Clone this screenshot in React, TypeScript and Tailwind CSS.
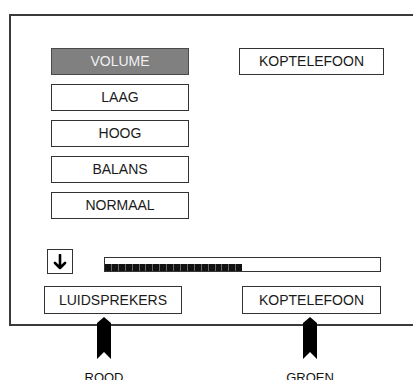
import type { ReactNode } from "react";

const font = { fontFamily: '"Liberation Sans", Arial, sans-serif' };

function Btn({
  children,
  active,
  className = "",
}: {
  children: ReactNode;
  active?: boolean;
  className?: string;
}) {
  return (
    <div
      className={
        "flex items-center justify-center border text-[14px] " +
        (active
          ? "bg-[#808080] border-[#4a4a4a] text-[#f0f0f0] "
          : "bg-white border-[#333] text-[#1a1a1a] ") +
        className
      }
    >
      {children}
    </div>
  );
}

// lintje met pijlpunt naar boven en inkeping onderaan
function Marker() {
  return (
    <svg width="14" height="42" viewBox="0 0 14 42" className="block">
      <polygon points="0,6 7,0 14,6 14,42 7,35 0,42" fill="#000" />
    </svg>
  );
}

function App() {
  const segments = Array.from({ length: 20 });

  return (
    <div className="w-[413px] h-[380px] overflow-hidden bg-white" style={font}>
      <div className="pt-[14px] pl-[9px]">
        {/* hoofdpaneel */}
        <div className="w-[420px] h-[312px] border-t-2 border-l-2 border-b-2 border-[#3a3a3a] flex flex-col">
          <div className="flex pt-[32px] pl-[40px]">
            <div className="flex flex-col gap-[9px] w-[138px]">
              <Btn active className="h-[27px]">VOLUME</Btn>
              <Btn className="h-[27px]">LAAG</Btn>
              <Btn className="h-[27px]">HOOG</Btn>
              <Btn className="h-[27px]">BALANS</Btn>
              <Btn className="h-[27px]">NORMAAL</Btn>
            </div>
            <div className="ml-[50px]">
              <Btn className="h-[27px] w-[145px]">KOPTELEFOON</Btn>
            </div>
          </div>

          <div className="flex items-end pl-[36px] mt-[30px]">
            <div className="w-[26px] h-[25px] border border-[#333] flex items-center justify-center">
              <svg width="14" height="16" viewBox="0 0 14 16">
                <path
                  d="M7 1 V14 M2 9 L7 14 L12 9"
                  stroke="#000"
                  strokeWidth="2.6"
                  fill="none"
                  strokeLinecap="round"
                  strokeLinejoin="round"
                />
              </svg>
            </div>
            <div className="ml-[31px] mb-[2px] w-[277px] h-[15px] border border-[#333] flex items-end">
              <div className="flex gap-px h-[7px] w-[137px] bg-[#666]">
                {segments.map((_, i) => (
                  <span key={i} className="flex-1 h-full bg-[#111]" />
                ))}
              </div>
            </div>
          </div>

          <div className="flex pl-[33px] mt-[12px]">
            <Btn className="h-[28px] w-[138px]">LUIDSPREKERS</Btn>
            <Btn className="h-[28px] w-[139px] ml-[60px]">KOPTELEFOON</Btn>
          </div>
        </div>
      </div>

      {/* aansluitingen */}
      <div className="flex -mt-[9px] pl-[64px] relative">
        <div className="w-[80px] flex flex-col items-center">
          <Marker />
          <span className="mt-[11px] text-[13px] leading-[16px] text-[#111]">ROOD</span>
        </div>
        <div className="w-[80px] ml-[126px] flex flex-col items-center">
          <Marker />
          <span className="mt-[11px] text-[13px] leading-[16px] text-[#111]">GROEN</span>
        </div>
      </div>
    </div>
  );
}

export default App;
